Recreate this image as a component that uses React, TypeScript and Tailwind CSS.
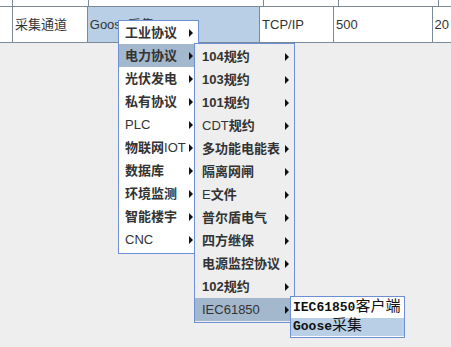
import React from "react";

type Item = { label: string; latinBold?: boolean; hot?: boolean };

const MENU1: Item[] = [
  { label: "工业协议" },
  { label: "电力协议", hot: true },
  { label: "光伏发电" },
  { label: "私有协议" },
  { label: "PLC" },
  { label: "物联网IOT" },
  { label: "数据库" },
  { label: "环境监测" },
  { label: "智能楼宇" },
  { label: "CNC" },
];

const MENU2: Item[] = [
  { label: "104规约", latinBold: true },
  { label: "103规约", latinBold: true },
  { label: "101规约", latinBold: true },
  { label: "CDT规约" },
  { label: "多功能电能表" },
  { label: "隔离网闸" },
  { label: "E文件" },
  { label: "普尔盾电气" },
  { label: "四方继保" },
  { label: "电源监控协议" },
  { label: "102规约", latinBold: true },
  { label: "IEC61850", hot: true },
];

// split label into latin / cjk runs so cjk is bold and latin stays plain
function Label({ text, latinBold }: { text: string; latinBold?: boolean }) {
  const parts = text.match(/[\x00-\x7f]+|[^\x00-\x7f]+/g) || [];
  return (
    <span className="whitespace-nowrap">
      {parts.map((p, i) => {
        const latin = /^[\x00-\x7f]+$/.test(p);
        return (
          <span key={i} className={latin && !latinBold ? "font-normal" : "font-bold"}>
            {p}
          </span>
        );
      })}
    </span>
  );
}

function Arrow() {
  return (
    <svg width="4" height="8" viewBox="0 0 4 8" className="shrink-0">
      <path d="M0 0 L4 4 L0 8 Z" fill="#111" />
    </svg>
  );
}

function MenuRow({ item, padL, padR }: { item: Item; padL: string; padR: string }) {
  return (
    <div
      className={`h-[23px] flex items-center justify-between ${padL} ${padR} ${item.hot ? "bg-[#a3b8cc]" : ""}`}
    >
      <Label text={item.label} latinBold={item.latinBold} />
      <Arrow />
    </div>
  );
}

export default function App() {
  const cell = "h-full flex items-center border-r border-[#7a8a99] px-[2px]";
  return (
    <div className="relative w-[451px] h-[347px] overflow-hidden bg-[#eeeeee] text-[13px] text-[#333] font-['Liberation_Sans','Noto_Sans_CJK_SC',sans-serif]">
      {/* table rows */}
      <div className="h-[6px] flex bg-white">
        <div className="w-[13px] border-r border-[#7a8a99]" />
        <div className="w-[76px] border-r border-[#7a8a99]" />
        <div className="w-[175px] border-r border-[#7a8a99]" />
        <div className="w-[75px] border-r border-[#7a8a99]" />
        <div className="w-[100px] border-r border-[#7a8a99]" />
        <div className="flex-1" />
      </div>
      <div className="h-[37px] flex bg-white border-t border-b border-[#7a8a99]">
        <div className={`${cell} w-[13px]`} />
        <div className={`${cell} w-[76px]`}>采集通道</div>
        <div className={`${cell} w-[175px] bg-[#b8cfe5]`}>Goose采集</div>
        <div className={`${cell} w-[75px]`}>TCP/IP</div>
        <div className={`${cell} w-[100px]`}>500</div>
        <div className="h-full flex items-center px-[2px] flex-1">20</div>
      </div>

      {/* popup menu level 1 */}
      <div className="absolute left-[118px] top-[20px] w-[81px] bg-white border border-[#6d8fd6] pt-[0px] pb-[2px]">
        {MENU1.map((it) => (
          <MenuRow key={it.label} item={it} padL="pl-[6px]" padR="pr-[5px]" />
        ))}
      </div>

      {/* level 2 */}
      <div className="absolute left-[194px] top-[43px] w-[101px] bg-[#eeeeee] border border-[#6d8fd6] py-[1px]">
        {MENU2.map((it) => (
          <MenuRow key={it.label} item={it} padL="pl-[7px]" padR="pr-[5px]" />
        ))}
      </div>

      {/* level 3 */}
      <div className="absolute left-[290px] top-[296px] w-[115px] bg-white border border-[#6d8fd6] pt-[1px] pb-[1px] text-[#111] font-['Liberation_Mono','Noto_Sans_CJK_SC',monospace]">
        <div className="h-[20px] flex items-center pl-[2px] whitespace-nowrap">
          <span className="font-bold text-[13px]">IEC61850</span>
          <span className="text-[15px]">客户端</span>
        </div>
        <div className="h-[18px] flex items-center pl-[2px] bg-[#b8cfe5] whitespace-nowrap">
          <span className="font-bold text-[13px]">Goose</span>
          <span className="text-[15px]">采集</span>
        </div>
      </div>
    </div>
  );
}
